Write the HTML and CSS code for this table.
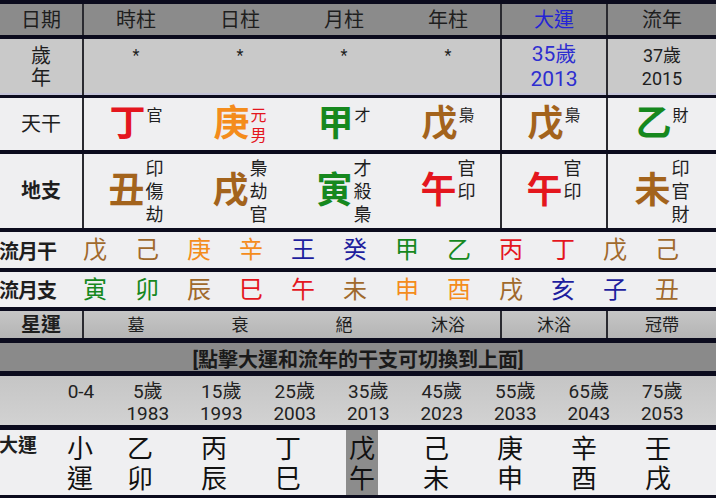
FILE: index.html
```html
<!DOCTYPE html>
<html lang="zh-Hant">
<head>
<meta charset="utf-8">
<title>八字排盤</title>
<link rel="stylesheet" href="styles.css">
</head>
<body>
<div class="page">
  <div class="row grid r-head">
    <div class="cell lbl">日期</div>
    <div class="cell four"><span>時柱</span><span>日柱</span><span>月柱</span><span>年柱</span></div>
    <div class="cell blue">大運</div>
    <div class="cell">流年</div>
  </div>

  <div class="row grid r-age">
    <div class="cell lbl two">歲<br>年</div>
    <div class="cell four stars"><span>*</span><span>*</span><span>*</span><span>*</span></div>
    <div class="cell blue age-big">35歲<br>2013</div>
    <div class="cell age-sm">37歲<br>2015</div>
  </div>

  <div class="row grid r-gan">
    <div class="cell lbl">天干</div>
    <div class="cell four">
      <span class="grp"><b class="big red">丁</b><i class="sup">官</i></span>
      <span class="grp"><b class="big orange">庚</b><i class="sup red">元<br>男</i></span>
      <span class="grp"><b class="big green">甲</b><i class="sup">才</i></span>
      <span class="grp"><b class="big brown">戊</b><i class="sup">梟</i></span>
    </div>
    <div class="cell"><span class="grp"><b class="big brown">戊</b><i class="sup">梟</i></span></div>
    <div class="cell"><span class="grp"><b class="big green">乙</b><i class="sup">財</i></span></div>
  </div>

  <div class="row grid r-zhi">
    <div class="cell lbl bold">地支</div>
    <div class="cell four">
      <span class="grp"><b class="big brown">丑</b><i class="sub">印<br>傷<br>劫</i></span>
      <span class="grp"><b class="big brown">戌</b><i class="sub">梟<br>劫<br>官</i></span>
      <span class="grp"><b class="big green">寅</b><i class="sub">才<br>殺<br>梟</i></span>
      <span class="grp"><b class="big red">午</b><i class="sub">官<br>印</i></span>
    </div>
    <div class="cell"><span class="grp"><b class="big red">午</b><i class="sub">官<br>印</i></span></div>
    <div class="cell"><span class="grp"><b class="big brown">未</b><i class="sub">印<br>官<br>財</i></span></div>
  </div>

  <div class="row flow r-lg">
    <div class="flbl">流月干</div>
    <span class="m brown">戊</span><span class="m brown">己</span>
    <span class="m orange">庚</span><span class="m orange">辛</span>
    <span class="m blue2">王</span><span class="m blue2">癸</span>
    <span class="m green">甲</span><span class="m green">乙</span>
    <span class="m red">丙</span><span class="m red">丁</span>
    <span class="m brown">戊</span><span class="m brown">己</span>
  </div>

  <div class="row flow r-lz">
    <div class="flbl">流月支</div>
    <span class="m green">寅</span><span class="m green">卯</span>
    <span class="m brown">辰</span><span class="m red">巳</span>
    <span class="m red">午</span><span class="m brown">未</span>
    <span class="m orange">申</span><span class="m orange">酉</span>
    <span class="m brown">戌</span><span class="m blue2">亥</span>
    <span class="m blue2">子</span><span class="m brown">丑</span>
  </div>

  <div class="row grid r-star">
    <div class="cell lbl bold">星運</div>
    <div class="cell four"><span>墓</span><span>衰</span><span>絕</span><span>沐浴</span></div>
    <div class="cell">沐浴</div>
    <div class="cell">冠帶</div>
  </div>

  <div class="row r-banner">[點擊大運和流年的干支可切換到上面]</div>

  <div class="row r-ages">
    <div class="ag a0">0-4</div>
    <div class="ag a1">5歲<br>1983</div>
    <div class="ag">15歲<br>1993</div>
    <div class="ag">25歲<br>2003</div>
    <div class="ag">35歲<br>2013</div>
    <div class="ag">45歲<br>2023</div>
    <div class="ag">55歲<br>2033</div>
    <div class="ag">65歲<br>2043</div>
    <div class="ag">75歲<br>2053</div>
  </div>

  <div class="row r-dy">
    <div class="dy-lbl">大運</div>
    <div class="dy d0"><span class="dz">小<br>運</span></div>
    <div class="dy"><span class="dz">乙<br>卯</span></div>
    <div class="dy"><span class="dz">丙<br>辰</span></div>
    <div class="dy"><span class="dz">丁<br>巳</span></div>
    <div class="dy"><span class="dz hl">戊<br>午</span></div>
    <div class="dy"><span class="dz">己<br>未</span></div>
    <div class="dy"><span class="dz">庚<br>申</span></div>
    <div class="dy"><span class="dz">辛<br>酉</span></div>
    <div class="dy"><span class="dz">壬<br>戌</span></div>
  </div>
</div>
</body>
</html>
```
FILE: styles.css
```css
html, body {
  margin: 0;
  padding: 0;
  background: #0b0b1d;
}
body {
  width: 716px;
  height: 498px;
  overflow: hidden;
  font-family: Roboto, "Noto Sans CJK TC", sans-serif;
  color: #1e1e1e;
}
.page {
  display: flex;
  flex-direction: column;
  padding-top: 4px;
}
.row { flex: none; }

/* grid rows with column dividers */
.grid {
  display: grid;
  grid-template-columns: 82px 416px 104px 1fr;
  column-gap: 2px;
  background: #2a2a30;
}
.cell {
  display: flex;
  align-items: center;
  justify-content: center;
  font-size: 20px;
  line-height: 22px;
  text-align: center;
}
.four {
  display: grid;
  grid-template-columns: repeat(4, 1fr);
  align-items: center;
  justify-items: center;
}
.four > span { display: flex; align-items: center; justify-content: center; }
.bold { font-weight: 700; }

.r-head { height: 31px; }
.r-head .cell { background: #8b8b8b; }
.blue { color: #2424d6; }

.r-age { height: 56px; margin-top: 4px; }
.r-age .cell { background: #c9c9c9; box-shadow: inset 0 -2px 0 #c2c2d6; }
.stars { align-self: stretch; }
.stars > span { font-size: 16px; line-height: 22px; align-self: start; padding-top: 6px; }
.age-big { font-size: 21px; line-height: 25px; color: #2e2ed0; }
.age-sm { font-size: 18px; line-height: 23px; }

.r-gan { height: 52px; margin-top: 3px; }
.r-gan .cell, .r-zhi .cell { background: #efeff1; }
.r-zhi { height: 74px; margin-top: 4px; }

.grp {
  display: flex;
  align-items: center;
  height: 100%;
}
.r-gan .four, .r-zhi .four { align-self: stretch; align-items: stretch; }
.r-gan .grp { align-items: flex-start; padding-top: 8px; box-sizing: border-box; }
.big {
  font-size: 36px;
  line-height: 36px;
  font-weight: 700;
}
.sup, .sub {
  font-style: normal;
  font-weight: 400;
  text-align: left;
  margin-left: 1px;
}
.sup { font-size: 16px; line-height: 20px; }
.sub { font-size: 18px; line-height: 23px; align-self: flex-start; padding-top: 3px; }
.r-zhi .grp { align-items: center; }

.red { color: #e4161e; }
.orange { color: #f48c1c; }
.green { color: #16881e; }
.brown { color: #a3631c; }
.blue2 { color: #1e1e9e; }

/* flowing month rows */
.flow {
  display: flex;
  align-items: center;
  background: #efeff1;
}
.flbl {
  width: 70px;
  margin-left: -1px;
  font-size: 20px;
  font-weight: 700;
  letter-spacing: -1px;
  flex: none;
}
.m {
  width: 52px;
  flex: none;
  text-align: center;
  font-size: 24px;
  line-height: 28px;
}
.r-lg { height: 36px; margin-top: 4px; }
.r-lz { height: 35px; margin-top: 4px; }
.r-lg .m.brown, .r-lz .m.brown { color: #a0692c; }

.r-star { height: 27px; margin-top: 4px; }
.r-star .cell {
  background: linear-gradient(#c6c6c6, #b4b4b4);
  font-size: 17px;
}
.r-star .lbl { font-size: 20px; }

.r-banner {
  height: 28px;
  margin-top: 5px;
  background: #8a8a8a;
  display: flex;
  align-items: center;
  justify-content: center;
  padding-top: 3px;
  box-sizing: border-box;
  font-size: 20px;
  font-weight: 700;
  color: #1a1a1a;
}

.r-ages {
  height: 49px;
  margin-top: 5px;
  background: linear-gradient(#c5c5c5, #d2d2d2);
  display: flex;
  padding-left: 58px;
  box-sizing: border-box;
}
.ag {
  width: 73.5px;
  flex: none;
  text-align: center;
  font-size: 19px;
  line-height: 22px;
  padding-top: 5px;
  color: #222;
}
.a0 { width: 46px; }
.a1 { margin-left: 7px; }

.r-dy {
  height: 65px;
  margin-top: 5px;
  background: #efeff1;
  display: flex;
}
.dy-lbl {
  width: 58px;
  flex: none;
  font-size: 19px;
  font-weight: 700;
  line-height: 22px;
  padding-top: 5px;
  margin-left: -1px;
}
.dy {
  width: 74px;
  flex: none;
  display: flex;
  justify-content: center;
}
.d0 { width: 46px; }
.dz {
  width: 32px;
  text-align: center;
  font-size: 26px;
  line-height: 30px;
  padding-top: 4px;
  color: #111;
}
.hl { background: #8c8c8c; }
```
